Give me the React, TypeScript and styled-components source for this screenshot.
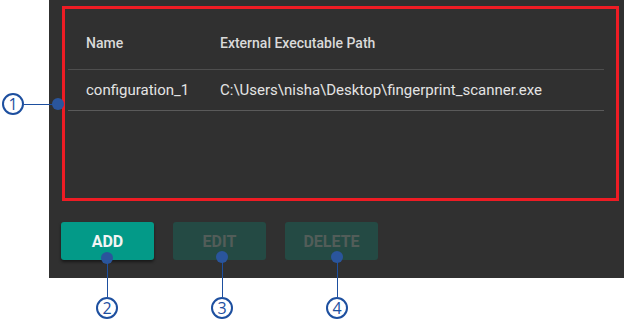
import styled, { createGlobalStyle } from 'styled-components';

const GlobalStyle = createGlobalStyle`
  html, body {
    margin: 0;
    padding: 0;
    background: #fff;
  }
  body {
    font-family: Roboto, "Liberation Sans", sans-serif;
  }
`;

const Page = styled.div`
  position: relative;
  width: 624px;
  height: 322px;
  background: #fff;
  overflow: hidden;
`;

const Panel = styled.div`
  margin-left: 49px;
  width: 575px;
  height: 278px;
  box-sizing: border-box;
  background: #303030;
  padding: 6px 5px 0 13px;
  display: flex;
  flex-direction: column;
`;

const ConfigBox = styled.div`
  height: 195px;
  box-sizing: border-box;
  border: 3px solid #ee1c24;
  padding: 9px 12px 0 3px;
`;

const Table = styled.table`
  width: 100%;
  border-collapse: collapse;
  text-align: left;
`;

const HeadCell = styled.th<{ $width?: number; $pad?: number }>`
  height: 51px;
  padding: 0 0 0 ${({ $pad }) => $pad ?? 18}px;
  font-size: 14px;
  font-weight: 500;
  color: #dadada;
  border-bottom: 1px solid #4e4e4e;
  width: ${({ $width }) => ($width ? `${$width}px` : 'auto')};
  box-sizing: border-box;
`;

const Cell = styled.td<{ $pad?: number }>`
  height: 40px;
  padding: 0 0 0 ${({ $pad }) => $pad ?? 18}px;
  font-size: 15px;
  color: #e4e4e4;
  border-bottom: 1px solid #5a5a5a;
  white-space: nowrap;
`;

const ButtonRow = styled.div`
  display: flex;
  gap: 19px;
  margin-top: 21px;
  margin-left: -1px;
`;

const Button = styled.button<{ $disabled?: boolean }>`
  width: 93px;
  height: 38px;
  border: none;
  border-radius: 3px;
  padding: 0;
  font-family: Roboto, "Liberation Sans", sans-serif;
  font-size: 16px;
  font-weight: 700;
  text-transform: uppercase;
  background: ${({ $disabled }) => ($disabled ? '#244a44' : '#039a88')};
  color: ${({ $disabled }) => ($disabled ? '#525d59' : '#f4f4f4')};
  box-shadow: ${({ $disabled }) =>
    $disabled ? 'none' : '0 2px 3px rgba(0, 0, 0, 0.5)'};
`;

const BLUE = '#1d4f9f';

const Dot = styled.div<{ $x: number; $y: number }>`
  position: absolute;
  left: ${({ $x }) => $x - 6}px;
  top: ${({ $y }) => $y - 6}px;
  width: 12px;
  height: 12px;
  border-radius: 50%;
  background: #2a559c;
`;

const Leader = styled.div<{ $x: number; $y: number; $w: number; $h: number }>`
  position: absolute;
  left: ${({ $x }) => $x}px;
  top: ${({ $y }) => $y}px;
  width: ${({ $w }) => $w}px;
  height: ${({ $h }) => $h}px;
  background: ${BLUE};
`;

const Badge = styled.div<{ $x: number; $y: number }>`
  position: absolute;
  left: ${({ $x }) => $x - 11}px;
  top: ${({ $y }) => $y - 11}px;
  width: 22px;
  height: 22px;
  box-sizing: border-box;
  border: 2px solid ${BLUE};
  border-radius: 50%;
  color: ${BLUE};
  font-family: "Open Sans", "Noto Sans", sans-serif;
  font-size: 16px;
  line-height: 18px;
  text-align: center;
`;

const callouts = [
  { n: 1, dx: 58, dy: 104, bx: 13, by: 104, side: 'left' },
  { n: 2, dx: 107, dy: 258, bx: 107, by: 308, side: 'down' },
  { n: 3, dx: 222, dy: 257, bx: 222, by: 308, side: 'down' },
  { n: 4, dx: 337, dy: 257, bx: 337, by: 308, side: 'down' },
];

const App = () => {
  return (
    <Page>
      <GlobalStyle />
      <Panel>
        <ConfigBox>
          <Table>
            <thead>
              <tr>
                <HeadCell $width={152}>Name</HeadCell>
                <HeadCell $pad={0}>External Executable Path</HeadCell>
              </tr>
            </thead>
            <tbody>
              <tr>
                <Cell>configuration_1</Cell>
                <Cell $pad={0}>C:\Users\nisha\Desktop\fingerprint_scanner.exe</Cell>
              </tr>
            </tbody>
          </Table>
        </ConfigBox>
        <ButtonRow>
          <Button>Add</Button>
          <Button $disabled>Edit</Button>
          <Button $disabled>Delete</Button>
        </ButtonRow>
      </Panel>

      {callouts.map((c) => (
        <div key={c.n}>
          {c.side === 'left' ? (
            <Leader $x={c.bx + 11} $y={c.dy} $w={c.dx - c.bx - 11} $h={1} />
          ) : (
            <Leader $x={c.dx} $y={c.dy} $w={1} $h={c.by - c.dy - 11} />
          )}
          <Dot $x={c.dx} $y={c.dy} />
          <Badge $x={c.bx} $y={c.by}>{c.n}</Badge>
        </div>
      ))}
    </Page>
  );
};

export default App;
